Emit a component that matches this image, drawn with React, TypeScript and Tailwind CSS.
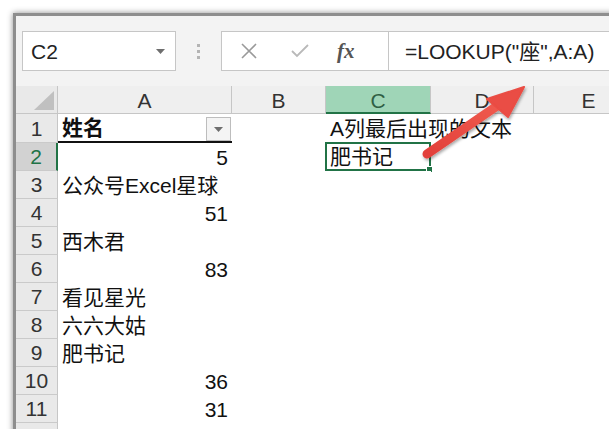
import React from "react";

const FONT = { fontFamily: '"Liberation Sans", "Noto Sans CJK SC", sans-serif' };

const COLS = [
  { key: "A", w: "w-[174px]" },
  { key: "B", w: "w-[94px]" },
  { key: "C", w: "w-[105px]" },
  { key: "D", w: "w-[103px]" },
  { key: "E", w: "w-[110px]" },
];

type Cell = { text: string; align?: "right"; bold?: boolean } | null;

const rows: { n: number; a: Cell; c: Cell }[] = [
  { n: 1, a: { text: "姓名", bold: true }, c: { text: "A列最后出现的文本" } },
  { n: 2, a: { text: "5", align: "right" }, c: { text: "肥书记" } },
  { n: 3, a: { text: "公众号Excel星球" }, c: null },
  { n: 4, a: { text: "51", align: "right" }, c: null },
  { n: 5, a: { text: "西木君" }, c: null },
  { n: 6, a: { text: "83", align: "right" }, c: null },
  { n: 7, a: { text: "看见星光" }, c: null },
  { n: 8, a: { text: "六六大姑" }, c: null },
  { n: 9, a: { text: "肥书记" }, c: null },
  { n: 10, a: { text: "36", align: "right" }, c: null },
  { n: 11, a: { text: "31", align: "right" }, c: null },
  { n: 12, a: null, c: null },
];

function CellText({ cell }: { cell: Cell }) {
  if (!cell) return null;
  return (
    <span
      className={`block w-full whitespace-nowrap text-[21px] leading-none text-[#111] ${
        cell.align === "right" ? "text-right pr-[4px]" : "pl-[4px]"
      } ${cell.bold ? "font-bold" : ""}`}
    >
      {cell.text}
    </span>
  );
}

export default function App() {
  return (
    <div className="relative w-[609px] h-[429px] bg-white overflow-hidden" style={FONT}>
      <div className="ml-[13px] mt-[13px] w-[640px] h-[440px] border-l-[3px] border-t-[3px] border-[#8e8e8e] bg-[#f3f3f3] shadow-[0_0_6px_rgba(0,0,0,0.45)] flex flex-col">
        {/* Toolbar */}
        <div className="h-[70px] flex items-start pt-[15px] pl-[6px] shrink-0">
          <div className="w-[154px] h-[40px] bg-white border border-[#c6c6c6] flex items-center justify-between pl-[8px] pr-[10px]">
            <span className="text-[21px] text-[#222] leading-none">C2</span>
            <svg width="9" height="5" viewBox="0 0 9 5">
              <path d="M0 0 L9 0 L4.5 5 Z" fill="#6e6e6e" />
            </svg>
          </div>
          <div className="w-[45px] h-[40px] flex flex-col items-center justify-center gap-[3px]">
            <span className="w-[3px] h-[3px] bg-[#b4b4b4]" />
            <span className="w-[3px] h-[3px] bg-[#b4b4b4]" />
            <span className="w-[3px] h-[3px] bg-[#b4b4b4]" />
          </div>
          <div className="w-[167px] h-[40px] bg-white border border-[#c6c6c6] border-r-0 flex items-center">
            <svg className="ml-[19px]" width="16" height="16" viewBox="0 0 16 16">
              <path d="M1 1 L15 15 M15 1 L1 15" stroke="#9a9a9a" strokeWidth="1.6" />
            </svg>
            <svg className="ml-[34px]" width="18" height="14" viewBox="0 0 18 14">
              <path d="M1 7 L6 12 L17 1" stroke="#b9b9b9" strokeWidth="1.8" fill="none" />
            </svg>
            <span
              className="ml-[28px] text-[21px] italic font-bold text-[#555] leading-none"
              style={{ fontFamily: '"Liberation Serif", serif' }}
            >
              fx
            </span>
          </div>
          <div className="flex-1 h-[40px] bg-white border border-[#c6c6c6] flex items-center pl-[16px]">
            <span className="text-[21px] text-[#222] leading-none whitespace-nowrap">=LOOKUP("座",A:A)</span>
          </div>
        </div>

        {/* Column headers */}
        <div className="flex h-[28px] shrink-0">
          <div className="w-[42px] h-full bg-[#e9e9e9] border-r border-b border-[#c6c6c6] flex items-end justify-end pr-[3px] pb-[3px]">
            <svg width="20" height="19" viewBox="0 0 20 19">
              <path d="M20 0 L20 19 L0 19 Z" fill="#c0c0c0" />
            </svg>
          </div>
          {COLS.map((c) =>
            c.key === "C" ? (
              <div
                key={c.key}
                className={`${c.w} h-full bg-[#9fd5b7] border-r border-[#c6c6c6] border-b-[2px] border-b-[#217346] flex items-center justify-center text-[21px] text-[#2f5f44] leading-none pt-[2px]`}
              >
                {c.key}
              </div>
            ) : (
              <div
                key={c.key}
                className={`${c.w} h-full bg-[#efefef] border-r border-b border-[#c6c6c6] flex items-center justify-center text-[21px] text-[#333] leading-none pt-[2px]`}
              >
                {c.key}
              </div>
            )
          )}
        </div>

        {/* Rows */}
        <div className="relative flex flex-col">
          {rows.map((r) => (
            <div key={r.n} className={`flex ${r.n === 1 ? "h-[29px]" : "h-[28px]"}`}>
              <div
                className={`w-[42px] h-full border-b border-[#cacaca] flex items-center justify-center text-[21px] leading-none ${
                  r.n === 2
                    ? "bg-[#d2d2d2] text-[#217346] border-r-[2px] border-r-[#217346]"
                    : "bg-[#e9e9e9] text-[#333] border-r border-r-[#c6c6c6]"
                }`}
              >
                {r.n === 12 ? "" : r.n}
              </div>
              <div
                className={`w-[174px] h-full bg-white relative flex items-center ${
                  r.n === 1 ? "border-b-[2px] border-[#111]" : ""
                }`}
              >
                <CellText cell={r.a} />
                {r.n === 1 && (
                  <div className="absolute right-[1px] top-[3px] w-[25px] h-[24px] bg-[#f4f4f4] border border-[#bdbdbd] flex items-center justify-center">
                    <svg width="9" height="5" viewBox="0 0 9 5">
                      <path d="M0 0 L9 0 L4.5 5 Z" fill="#6e6e6e" />
                    </svg>
                  </div>
                )}
              </div>
              <div className="w-[94px] h-full bg-white" />
              <div className="w-[105px] h-full bg-white relative flex items-center overflow-visible">
                {r.n === 1 ? (
                  <span className="pl-[4px] whitespace-nowrap text-[21px] leading-none text-[#111]">{r.c?.text}</span>
                ) : r.n === 2 ? (
                  <div className="absolute -left-[1px] -top-[1px] w-[106px] h-[29px] border-[2px] border-[#217346] flex items-center">
                    <span className="pl-[3px] whitespace-nowrap text-[21px] leading-none text-[#111]">{r.c?.text}</span>
                    <span className="absolute -right-[4px] -bottom-[4px] w-[7px] h-[7px] bg-[#217346] border border-white" />
                  </div>
                ) : null}
              </div>
              <div className="flex-1 h-full bg-white" />
            </div>
          ))}
        </div>
      </div>

      {/* Red arrow overlay */}
      <svg className="absolute left-0 top-0" width="609" height="429" viewBox="0 0 609 429">
        <defs>
          <filter id="sh" x="-20%" y="-20%" width="140%" height="140%">
            <feDropShadow dx="1" dy="2" stdDeviation="1.5" floodColor="#000" floodOpacity="0.35" />
          </filter>
          <linearGradient id="rg" x1="0" y1="1" x2="1" y2="0">
            <stop offset="0" stopColor="#e2403a" />
            <stop offset="1" stopColor="#ef5a4e" />
          </linearGradient>
        </defs>
        <g filter="url(#sh)">
          <line x1="427" y1="154" x2="497" y2="106" stroke="url(#rg)" strokeWidth="9" strokeLinecap="round" />
          <path d="M524 87 L487 99 L508 117 Z" fill="#ea4d44" stroke="#ea4d44" strokeWidth="2" strokeLinejoin="round" />
        </g>
      </svg>
    </div>
  );
}
